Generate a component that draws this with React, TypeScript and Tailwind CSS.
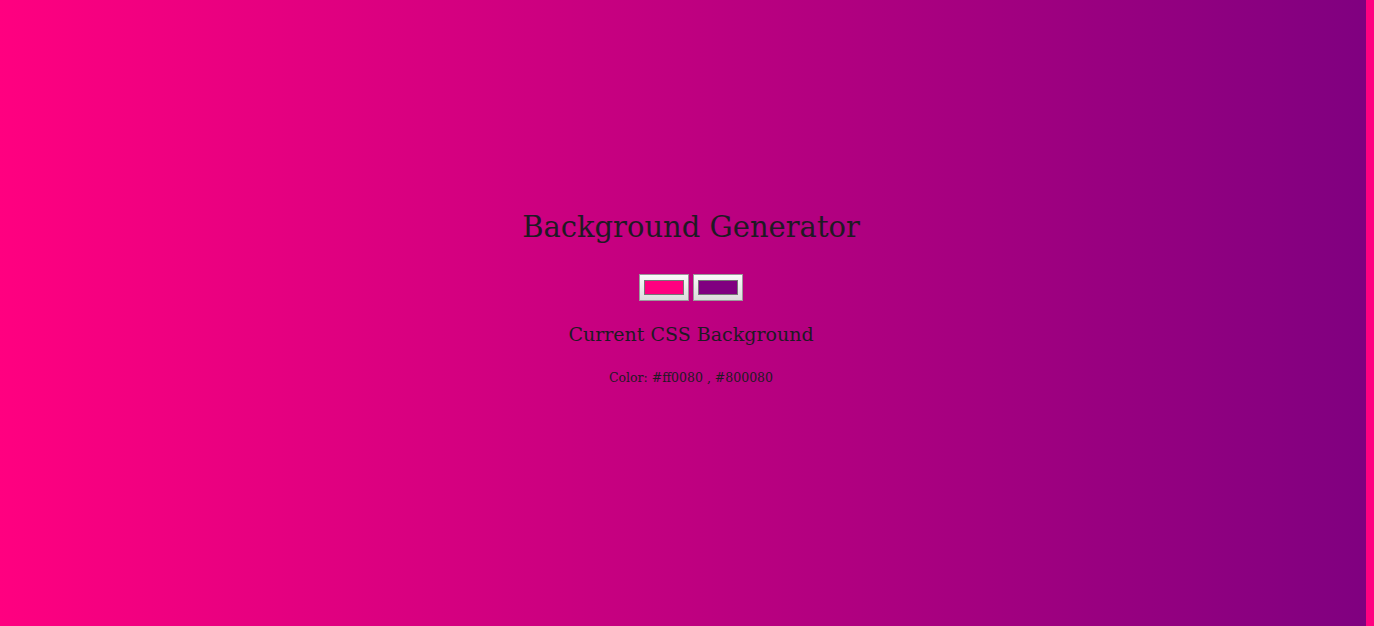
import React from 'react';

const SERIF = { fontFamily: '"DejaVu Serif", "Liberation Serif", serif' };

function Swatch({ color }: { color: string }) {
  return (
    <div className="w-[50px] h-[27px] border border-[#9a9a9a] bg-gradient-to-b from-[#fafafa] to-[#dcdcdc] flex items-center justify-center">
      <div className="w-[40px] h-[15px] border border-[#777]" style={{ backgroundColor: color }} />
    </div>
  );
}

export default function App() {
  return (
    <div className="flex h-[626px] w-full overflow-hidden bg-[#ff0080]">
      <div className="w-[1366px] h-full bg-[linear-gradient(to_right,#ff0080,#800080)] pl-4">
        <div className="flex flex-col items-center pt-[205px] text-[#1e1a24]" style={SERIF}>
          <h1 className="text-[29px] leading-[44px]">Background Generator</h1>
          <div className="flex gap-[4px] mt-[25px]">
            <Swatch color="#ff0080" />
            <Swatch color="#800080" />
          </div>
          <h3 className="text-[19px] leading-[30px] mt-[18px]">Current CSS Background</h3>
          <p className="text-[12.5px] leading-[20px] mt-[19px]">Color: #ff0080 , #800080</p>
        </div>
      </div>
    </div>
  );
}
